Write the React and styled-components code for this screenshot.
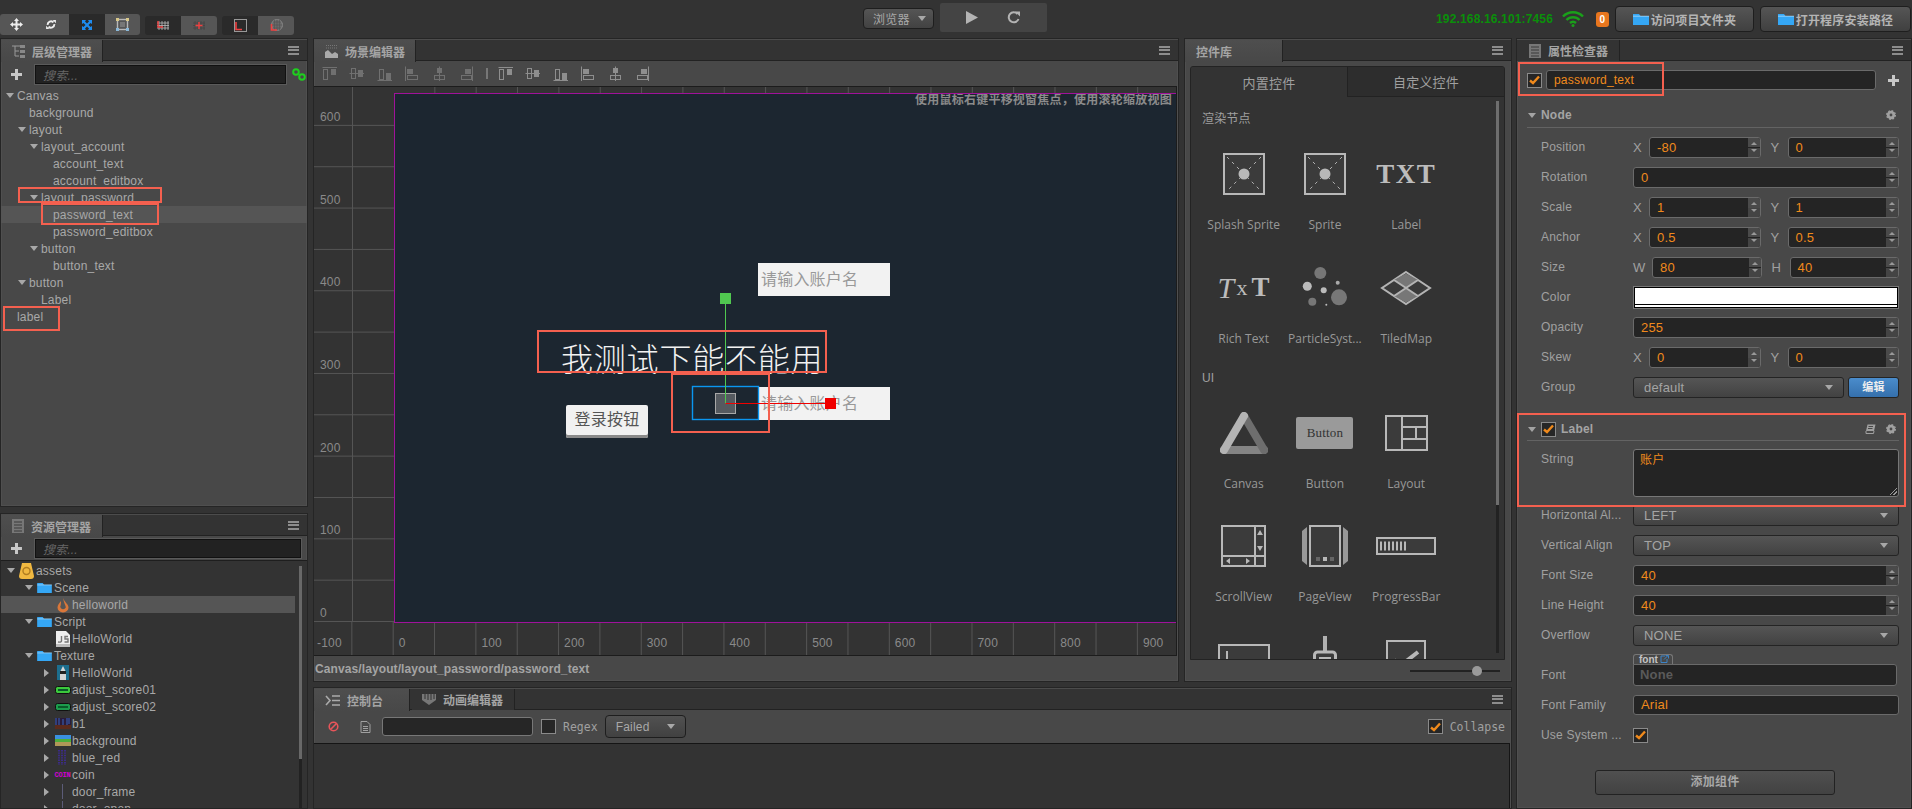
import React from "react";
import styled, { createGlobalStyle } from "styled-components";

const CJK = `"Liberation Sans", "Noto Sans CJK SC", sans-serif`;

const GlobalStyle = createGlobalStyle`
  html, body {
    margin: 0;
    padding: 0;
    background: #333;
    overflow: hidden;
  }
  * { box-sizing: border-box; }
  svg { display: block; flex: none; }
`;

const Page = styled.div`
  position: relative;
  width: 1912px;
  height: 809px;
  overflow: hidden;
  background: #333;
  color: #a8a8a8;
  font: 12px ${CJK};
  letter-spacing: 0.2px;
  display: flex;
  flex-direction: column;
`;

const Highlight = styled.div`
  position: absolute;
  left: ${(p) => p.$l}px;
  top: ${(p) => p.$t}px;
  width: ${(p) => p.$w}px;
  height: ${(p) => p.$h}px;
  border: 2px solid #f4604f;
  pointer-events: none;
`;

/* top bar */
const TopBar = styled.div`
  height: 38px;
  flex: none;
  display: grid;
  grid-template-columns: 863px auto 1fr;
  align-items: center;
`;
const ToolGroups = styled.div`
  display: flex;
  align-items: flex-end;
  height: 35px;
  align-self: start;
`;
const ToolGroup = styled.div`
  display: flex;
  height: ${(p) => p.$h || 19}px;
  margin-left: ${(p) => p.$ml || 0}px;
  border-radius: 3px;
  overflow: hidden;
`;
const ToolBtn = styled.div`
  width: ${(p) => p.$w || 36}px;
  display: flex;
  align-items: center;
  justify-content: center;
  background: ${(p) => (p.$on ? "#2a2a2a" : "#565656")};
`;
const CenterTools = styled.div`
  display: flex;
  align-items: center;
  gap: 6px;
`;
const BrowserSelect = styled.div`
  width: 71px;
  height: 21px;
  border: 1px solid #1e1e1e;
  border-radius: 4px;
  background: linear-gradient(#555, #424242);
  color: #a8a8a8;
  display: flex;
  align-items: center;
  padding-left: 9px;
  gap: 8px;
  margin-top: -1px;
`;
const PlayGroup = styled.div`
  width: 107px;
  height: 29px;
  background: #444;
  border-radius: 2px;
  display: flex;
  align-items: center;
  justify-content: space-around;
  padding: 0 12px;
  margin-top: -3px;
`;
const RightTools = styled.div`
  display: flex;
  align-items: center;
  justify-content: flex-end;
  padding-right: 1px;
`;
const IpText = styled.span`
  color: #0a8f0a;
  font-weight: 700;
  letter-spacing: 0.15px;
  margin-right: 9px;
`;
const Badge = styled.span`
  width: 13px;
  height: 15px;
  margin: 0 6px 0 12px;
  border-radius: 3px;
  background: #e8761e;
  color: #fff;
  font-size: 10px;
  font-weight: 700;
  display: flex;
  align-items: center;
  justify-content: center;
`;
const ProjectBtn = styled.div`
  width: ${(p) => p.$w}px;
  height: 26px;
  margin-left: ${(p) => p.$ml || 0}px;
  border: 1px solid #1e1e1e;
  border-radius: 4px;
  background: linear-gradient(#555, #404040);
  color: #b4b4b4;
  font-weight: 700;
  display: flex;
  align-items: center;
  justify-content: center;
  gap: 2px;
`;

/* layout */
const Workspace = styled.div`
  flex: 1;
  min-height: 0;
  display: flex;
`;
const LeftColumn = styled.div`
  width: 308px;
  flex: none;
  display: flex;
  flex-direction: column;
  gap: 6px;
`;
const MiddleColumn = styled.div`
  width: 1199px;
  flex: none;
  margin: 0 4px 0 5px;
  display: flex;
  flex-direction: column;
  gap: 5px;
`;
const MiddleTop = styled.div`
  height: 644px;
  flex: none;
  display: flex;
  gap: 5px;
`;
const Panel = styled.section`
  display: flex;
  flex-direction: column;
  background: #484848;
  border: 1px solid #252525;
  box-shadow: inset 0 0 0 1px #4f4f4f;
  overflow: hidden;
  flex: none;
  width: ${(p) => (p.$w ? `${p.$w}px` : "auto")};
  height: ${(p) => (p.$h ? `${p.$h}px` : "auto")};
  min-height: 0;
`;
const TabBar = styled.div`
  height: 22px;
  flex: none;
  display: flex;
  background: #333;
  border-bottom: 1px solid #222;
  border-top: 1px solid #4c4c4c;
  position: relative;
`;
const Tab = styled.div`
  width: ${(p) => p.$w}px;
  height: ${(p) => (p.$on ? 22 : 21)}px;
  flex: none;
  margin-right: ${(p) => (p.$on ? 2 : 0)}px;
  padding-left: ${(p) => (p.$pl === undefined ? 11 : p.$pl)}px;
  display: flex;
  align-items: center;
  gap: 7px;
  color: #a4a4a4;
  font-weight: 700;
  letter-spacing: 0;
  background: ${(p) => (p.$on ? "linear-gradient(#4e4e4e, #484848)" : "#333")};
  border-right: 1px solid #222;
  position: relative;
  z-index: 1;
`;
const MenuBtn = styled.div`
  margin-left: auto;
  margin-right: 8px;
  align-self: center;
  width: 11px;
  height: 9px;
  border-top: 2px solid #8d8d8d;
  border-bottom: 2px solid #8d8d8d;
  position: relative;
  &::after {
    content: "";
    position: absolute;
    left: 0;
    right: 0;
    top: 1.5px;
    height: 2px;
    background: #8d8d8d;
  }
`;

const SearchRow = styled.div`
  display: flex;
  align-items: center;
  height: ${(p) => p.$h}px;
  flex: none;
  padding-left: 10px;
`;
const Plus = styled.span`
  width: 11px;
  height: 11px;
  background:
    linear-gradient(#c8c8c8, #c8c8c8) center / 11px 3px no-repeat,
    linear-gradient(#c8c8c8, #c8c8c8) center / 3px 11px no-repeat;
  margin-right: ${(p) => p.$mr || 0}px;
`;
const SearchInput = styled.div`
  width: ${(p) => p.$w}px;
  height: 19px;
  background: #222;
  border: 1px solid #111;
  outline: 1px solid #5a5a5a;
  color: #666;
  font-style: italic;
  display: flex;
  align-items: center;
  padding-left: 7px;
  margin-right: 6px;
`;

/* trees */
const Tree = styled.div`
  flex: 1;
  min-height: 0;
  padding-top: ${(p) => p.$pt || 0}px;
  background: ${(p) => (p.$dark ? "#333" : "transparent")};
  border-top: ${(p) => (p.$dark ? "1px solid #1e1e1e" : "0")};
  position: relative;
  overflow: hidden;
`;
const NodeRow = styled.div`
  height: 17px;
  display: flex;
  align-items: center;
  white-space: nowrap;
  padding-left: ${(p) => 5 + p.$depth * 12}px;
  background: ${(p) => (p.$sel ? "#555" : "transparent")};
`;
const AssetRow = styled.div`
  height: 17px;
  width: 294px;
  display: flex;
  align-items: center;
  white-space: nowrap;
  padding-left: ${(p) => 6 + p.$depth * 18}px;
  background: ${(p) => (p.$sel ? "#555" : "transparent")};
`;
const ArrowSlot = styled.span`
  width: ${(p) => p.$w}px;
  flex: none;
  display: flex;
  align-items: center;
`;
const CaretDown = styled.i`
  width: 0;
  height: 0;
  border-left: 4px solid transparent;
  border-right: 4px solid transparent;
  border-top: 5px solid ${(p) => p.$c || "#a8a8a8"};
`;
const CaretRight = styled.i`
  width: 0;
  height: 0;
  margin-left: 1px;
  border-top: 4px solid transparent;
  border-bottom: 4px solid transparent;
  border-left: 5px solid #a8a8a8;
`;
const IconSlot = styled.span`
  width: 15px;
  height: 15px;
  flex: none;
  margin-right: 2px;
  display: flex;
  align-items: center;
  justify-content: center;
`;
const CoinMark = styled.span`
  color: #d400d4;
  font: 700 7px "Liberation Mono", monospace;
  letter-spacing: -0.2px;
`;
const TreeScroll = styled.div`
  position: absolute;
  left: 298px;
  top: 5px;
  bottom: 0;
  width: 3px;
  background: linear-gradient(#686868 193px, #222 193px);
`;

/* scene */
const AlignBar = styled.div`
  height: 25px;
  flex: none;
  display: flex;
  align-items: center;
  padding-left: 2px;
`;
const AlignBtn = styled.div`
  width: 27.5px;
  display: flex;
  justify-content: center;
`;
const AlignSep = styled.div`
  width: 11px;
  display: flex;
  justify-content: center;
  &::before {
    content: "";
    width: 2px;
    height: 11px;
    background: #777;
  }
`;
const Viewport = styled.div`
  height: 570px;
  flex: none;
  margin-right: 1px;
  border-top: 1px solid #1c1c1c;
  border-right: 1px solid #1c1c1c;
  display: grid;
  grid-template-columns: 80px 1fr;
  grid-template-rows: 535px 34px;
  background: #333;
  overflow: hidden;
`;
const LeftRuler = styled.div`
  display: flex;
  flex-direction: column;
  justify-content: flex-end;
  overflow: hidden;
  color: #8a8a8a;
  background:
    linear-gradient(90deg, #555 1px, transparent 1px) 38px 0 / 1px 100% no-repeat,
    linear-gradient(0deg, #555 1px, transparent 1px) 0 100% / 100% 41.35px;
`;
const RulerY = styled.div`
  height: 82.7px;
  flex: none;
  display: flex;
  align-items: flex-end;
  padding: 0 0 1px 6px;
  line-height: 15px;
`;
const CanvasColumn = styled.div`
  display: flex;
  flex-direction: column;
  min-width: 0;
`;
const TopStrip = styled.div`
  height: 6px;
  flex: none;
  background: linear-gradient(90deg, #555 1px, transparent 1px) -1px 0 / 41.35px 100%;
`;
const Canvas = styled.div`
  flex: 1;
  position: relative;
  overflow: hidden;
  background: #1c2630;
  border: 1px solid #a0129a;
  border-right: 0;
  margin-bottom: -1px;
`;
const BottomRuler = styled.div`
  grid-column: 1 / -1;
  display: flex;
  overflow: hidden;
  color: #8a8a8a;
  border-bottom: 1px solid #1c1c1c;
  background: linear-gradient(90deg, #555 1px, transparent 1px) -4px 0 / 41.35px 100%;
`;
const RulerX = styled.div`
  width: 82.7px;
  flex: none;
  padding: 14px 0 0 6px;
  line-height: 15px;
  &:first-child { margin-left: -4px; padding-left: 7px; }
`;
const HintText = styled.div`
  position: absolute;
  right: 4px;
  top: -1px;
  color: #8b8b8b;
  font-weight: 700;
  letter-spacing: 0.24px;
  line-height: 14px;
  white-space: nowrap;
`;
const EditBox = styled.div`
  position: absolute;
  left: 363px;
  top: ${(p) => p.$t}px;
  width: 132px;
  height: 33px;
  background: #f2f2f2;
  color: #999;
  font-size: 16px;
  padding-left: 3px;
  letter-spacing: 0.2px;
  line-height: 33px;
`;
const TitleText = styled.div`
  position: absolute;
  left: 166px;
  top: 243px;
  color: #f2f2f2;
  font: 300 32px/40px "Noto Sans CJK SC", sans-serif;
  letter-spacing: 0.8px;
  white-space: nowrap;
`;
const LoginButton = styled.div`
  position: absolute;
  left: 171px;
  top: 311px;
  width: 82px;
  height: 33px;
  border-radius: 2px;
  background: #f1f1f1;
  box-shadow: inset 0 -3px 0 #8a8a8a;
  color: #555;
  font-size: 16px;
  line-height: 30px;
  text-align: center;
`;
const GizmoLayer = styled.svg`
  position: absolute;
  left: 295px;
  top: 196px;
`;
const PathBar = styled.div`
  flex: 1;
  display: flex;
  align-items: center;
  padding-left: 1px;
  color: #a4a4a4;
  font-weight: 700;
  letter-spacing: 0.1px;
`;

/* widget library */
const LibBox = styled.div`
  flex: 1;
  min-height: 0;
  margin: 5px 6px 0 5px;
  background: #333;
  border: 1px solid #232323;
  border-radius: 3px 3px 0 0;
  position: relative;
  overflow: hidden;
`;
const LibTabs = styled.div`
  display: flex;
  height: 30px;
`;
const LibTab = styled.div`
  flex: 1;
  display: flex;
  align-items: center;
  justify-content: center;
  font-size: 13px;
  color: #a0a0a0;
  background: ${(p) => (p.$on ? "#333" : "#2d2d2d")};
  border-bottom: ${(p) => (p.$on ? "0" : "1px solid #222")};
  border-left: ${(p) => (p.$on ? "0" : "1px solid #222")};
`;
const LibBody = styled.div`
  padding: 14px 0 0 11px;
`;
const SectionTitle = styled.div`
  line-height: 16px;
  margin: ${(p) => p.$mt || 0}px 0 17px;
  color: #a0a0a0;
`;
const WidgetGrid = styled.div`
  display: grid;
  grid-template-columns: repeat(3, 81.3px);
  grid-auto-rows: 89px;
  row-gap: 24.5px;
  margin-left: 1px;
`;
const WidgetItem = styled.div`
  display: flex;
  flex-direction: column;
  align-items: center;
`;
const WidgetIcon = styled.div`
  height: 60px;
  flex: none;
  display: flex;
  align-items: center;
  justify-content: center;
  color: #bcbcbc;
  font-family: "Liberation Serif", serif;
  font-size: 27px;
  line-height: 1;
  white-space: nowrap;
`;
const TxtMark = styled.b`
  letter-spacing: 1.5px;
`;
const RichItalic = styled.i`
  font-weight: 400;
  font-size: 30px;
`;
const RichSmall = styled.span`
  font-size: 22px;
  margin: 0 4px 0 2px;
`;
const ButtonMark = styled.div`
  width: 57px;
  height: 32px;
  background: #9a9a9a;
  border-radius: 2px;
  color: #333;
  font: 13px/32px "Liberation Serif", serif;
  text-align: center;
`;
const WidgetLabel = styled.div`
  margin-top: 13px;
  font: 12px/16px "Open Sans", sans-serif;
  letter-spacing: 0;
  color: #989898;
  white-space: nowrap;
`;
const LibScrollBar = styled.div`
  position: absolute;
  right: 5px;
  top: 34px;
  height: 552px;
  width: 3px;
  background: linear-gradient(#6e6e6e 404px, #222 404px);
`;
const SliderRow = styled.div`
  height: 21px;
  flex: none;
  display: flex;
  align-items: center;
  justify-content: flex-end;
  padding-right: 11px;
`;
const SliderTrack = styled.div`
  width: 90px;
  height: 2px;
  background: #222;
  position: relative;
`;
const SliderThumb = styled.div`
  position: absolute;
  left: 62px;
  top: -4px;
  width: 10px;
  height: 10px;
  border-radius: 50%;
  background: #9a9a9a;
`;

/* console */
const ConsoleBar = styled.div`
  height: 33px;
  flex: none;
  display: flex;
  align-items: center;
  padding-left: 11px;
`;
const IconBtn = styled.div`
  margin-left: ${(p) => p.$ml || 0}px;
  display: flex;
`;
const FilterInput = styled.div`
  width: 151px;
  height: 19px;
  margin: 0 8px 0 11px;
  background: #262626;
  border: 1px solid #777;
  border-radius: 3px;
`;
const CheckBox = styled.div`
  width: 15px;
  height: 15px;
  flex: none;
  margin-left: ${(p) => p.$ml || 0}px;
  margin-right: ${(p) => p.$mr || 0}px;
  background: #262626;
  border: 1px solid #8a8a8a;
  display: flex;
  align-items: center;
  justify-content: center;
`;
const MonoLabel = styled.span`
  font: 11.5px "DejaVu Sans Mono", monospace;
  letter-spacing: 0;
  color: #a0a0a0;
  margin-left: 7px;
  white-space: nowrap;
`;
const FailedSelect = styled.div`
  width: 81px;
  height: 23px;
  margin-left: 7px;
  background: linear-gradient(#515151, #414141);
  border: 1px solid #1e1e1e;
  border-radius: 4px;
  display: flex;
  align-items: center;
  justify-content: space-between;
  padding: 0 10px;
`;
const ConsoleBody = styled.div`
  flex: 1;
  margin-right: 1px;
  background: #333;
  border-top: 1px solid #151515;
  border-right: 1px solid #151515;
`;

/* inspector */
const InspectorBody = styled.div`
  flex: 1;
  padding: 0 12px 0 10px;
`;
const NameRow = styled.div`
  height: 38px;
  display: flex;
  align-items: center;
`;
const NameInput = styled.div`
  width: 330px;
  height: 20px;
  margin: 0 12px 0 4px;
  background: #242424;
  border: 1px solid #6a6a6a;
  border-radius: 3px;
  color: #f08a1c;
  padding-left: 7px;
  line-height: 18px;
  font-size: 12px;
`;
const CompHeader = styled.div`
  display: flex;
  align-items: center;
  height: ${(p) => p.$h}px;
  margin-top: ${(p) => p.$mt || 0}px;
  margin-bottom: ${(p) => p.$mb || 0}px;
  padding: 4px 3px 0 1px;
  border-bottom: 1px solid #636363;
  font-weight: 700;
  color: #a4a4a4;
  gap: 5px;
`;
const HeaderTools = styled.div`
  margin-left: auto;
  display: flex;
  align-items: center;
  gap: 10px;
`;
const PropRow = styled.div`
  display: flex;
  align-items: ${(p) => p.$align || "center"};
  height: ${(p) => p.$h || 30}px;
  padding-left: 14px;
`;
const PropLabel = styled.div`
  width: 92px;
  flex: none;
  color: #a0a0a0;
  white-space: nowrap;
  line-height: ${(p) => p.$lh || 20}px;
`;
const PropField = styled.div`
  flex: 1;
  min-width: 0;
  display: flex;
  align-items: center;
`;
const AxisLabel = styled.span`
  width: ${(p) => p.$w}px;
  margin-left: ${(p) => p.$ml || 0}px;
  flex: none;
  font-size: 13px;
  color: #a0a0a0;
`;
const NumInput = styled.div`
  flex: 1;
  min-width: 0;
  height: 21px;
  display: flex;
  background: #242424;
  border: 1px solid #6a6a6a;
  border-radius: 3px;
  overflow: hidden;
`;
const NumValue = styled.div`
  flex: 1;
  color: #f08a1c;
  padding-left: 7px;
  line-height: 19px;
  font-size: 13px;
`;
const Spinner = styled.div`
  width: 12px;
  flex: none;
  background: linear-gradient(#4a4a4a 50%, #222 50%, #222 55%, #444 55%);
  display: flex;
  flex-direction: column;
  align-items: center;
  justify-content: space-around;
  padding: 2px 0;
`;
const SpinUp = styled.i`
  border-left: 3px solid transparent;
  border-right: 3px solid transparent;
  border-bottom: 3px solid #999;
`;
const SpinDown = styled.i`
  border-left: 3px solid transparent;
  border-right: 3px solid transparent;
  border-top: 3px solid #999;
`;
const ColorBar = styled.div`
  width: 100%;
  height: 23px;
  padding: 1px;
  border: 1px solid #777;
  background: #000;
  display: flex;
  flex-direction: column;
  gap: 1px;
  &::before {
    content: "";
    height: 16px;
    background: #fff;
  }
  &::after {
    content: "";
    height: 2px;
    background: #fff;
  }
`;
const SelectBox = styled.div`
  flex: 1;
  min-width: 0;
  height: 21px;
  display: flex;
  align-items: center;
  justify-content: space-between;
  padding: 0 10px;
  background: linear-gradient(#555, #424242);
  border: 1px solid #242424;
  border-radius: 3px;
  color: #a4a4a4;
  font-size: 13px;
`;
const EditBtn = styled.div`
  width: 51px;
  height: 21px;
  margin-left: 4px;
  background: linear-gradient(#4a8ccc, #3570ac);
  border: 1px solid #242424;
  border-radius: 3px;
  color: #eee;
  font-weight: 700;
  font-size: 11px;
  text-align: center;
  line-height: 19px;
`;
const StringArea = styled.div`
  flex: 1;
  height: 48px;
  margin-top: 8px;
  background: #242424;
  border: 1px solid #777;
  border-radius: 3px;
  color: #f08a1c;
  padding: 2px 0 0 6px;
  line-height: 16px;
  position: relative;
  &::after {
    content: "";
    position: absolute;
    right: 1px;
    bottom: 1px;
    width: 7px;
    height: 7px;
    background: linear-gradient(135deg, transparent 45%, #999 45%, #999 55%, transparent 55%, transparent 70%, #999 70%, #999 80%, transparent 80%);
  }
`;
const FontField = styled.div`
  width: 264px;
  padding-bottom: 4px;
`;
const FontChip = styled.div`
  width: 40px;
  height: 11px;
  padding-left: 5px;
  background: #484848;
  border: 1px solid #777;
  border-bottom: 0;
  border-radius: 3px 3px 0 0;
  color: #c4c4c4;
  font-size: 10px;
  font-weight: 700;
  line-height: 10px;
  letter-spacing: 0;
  display: flex;
  gap: 2px;
`;
const FontBox = styled.div`
  height: 22px;
  background: #242424;
  border: 1px solid #6a6a6a;
  border-radius: 0 3px 3px 3px;
  margin-top: -1px;
  color: #5a5a5a;
  padding-left: 6px;
  line-height: 20px;
  font-size: 13px;
  font-weight: 700;
`;
const TextInput = styled.div`
  flex: 1;
  height: 20px;
  background: #242424;
  border: 1px solid #6a6a6a;
  border-radius: 3px;
  color: #f08a1c;
  padding-left: 7px;
  line-height: 18px;
  font-size: 13px;
`;
const AddButton = styled.div`
  width: 240px;
  height: 25px;
  margin: 20px auto 0;
  position: relative;
  left: 2px;
  background: linear-gradient(#505050, #424242);
  border: 1px solid #222;
  border-radius: 3px;
  color: #a8a8a8;
  font-size: 12px;
  font-weight: 700;
  text-align: center;
  line-height: 23px;
`;

/* drawings */
const Check = () => (
  <svg width="11" height="10" viewBox="0 0 11 10">
    <path d="M1 5.5 L4 8 L10 1.5" fill="none" stroke="#f08a1c" strokeWidth="2.4" />
  </svg>
);
const Gear = () => (
  <svg width="10" height="10" viewBox="0 0 10 10">
    <circle cx="5" cy="5" r="2.8" fill="none" stroke="#a0a0a0" strokeWidth="2.8" />
    <circle cx="5" cy="5" r="4.4" fill="none" stroke="#a0a0a0" strokeWidth="1.2" strokeDasharray="1.8 1.65" />
  </svg>
);
const Book = () => (
  <svg width="11" height="10" viewBox="0 0 11 10">
    <path d="M2.5 .5 H10.5 L9 7 H1 Z" fill="#a0a0a0" />
    <path d="M1 7 V9.5 H8.5 L9 7" fill="none" stroke="#a0a0a0" />
    <path d="M3.5 2.5 H8 M3 4.5 H7.5" stroke="#484848" />
  </svg>
);
const Folder = ({ w = 16, h = 12 }) => (
  <svg width={w} height={h} viewBox="0 0 16 12">
    <path d="M0 1 H6 L7.5 3 H16 V12 H0 Z" fill="#35a7f5" />
    <path d="M0 3.2 H16" stroke="#cfe9fb" strokeWidth=".6" />
  </svg>
);
const Flame = () => (
  <svg width="14" height="16" viewBox="0 0 14 16">
    <path d="M7.5 1 C8 5 12.5 7 12.5 10.5 A5.5 5 0 0 1 1.5 10.5 C1.5 8 3.5 6 5 4 C5 6 5 8 4.2 10 A3 3 0 0 0 9.8 10.5 C9.8 8 7 5 7.5 1 Z" fill="#d9773a" />
  </svg>
);
const JsFile = () => (
  <svg width="14" height="16" viewBox="0 0 14 16">
    <path d="M0 0 H10 L14 4 V16 H0 Z" fill="#eee" />
    <path d="M0 13 H14 V16 H0 Z" fill="#bbb" />
    <path d="M5.5 5 V10 Q5.5 11.5 2 11 M12 5.5 H9 V8 H12 V11 H8.5" fill="none" stroke="#777" strokeWidth="1.4" />
  </svg>
);
const AssetsDb = () => (
  <svg width="15" height="16" viewBox="0 0 15 16">
    <path d="M3 0 H12 L15 13 Q15 16 12 16 H3 Q0 16 0 13 Z" fill="#f0b840" />
    <circle cx="7.5" cy="8" r="3.5" fill="none" stroke="#b07d20" strokeWidth="1.4" />
  </svg>
);
const ThumbCat = () => (
  <svg width="12" height="15" viewBox="0 0 12 15">
    <rect width="12" height="15" fill="#1c6e8e" />
    <path d="M3 15 V7 L6 1 L9 7 V15 Z" fill="#d6d6d6" />
    <rect x="3" y="6" width="6" height="3" fill="#222" />
  </svg>
);
const ThumbPill = ({ c }) => (
  <svg width="16" height="8" viewBox="0 0 16 8">
    <rect x=".5" y=".5" width="15" height="7" rx="2" fill={c} stroke="#111" />
    <rect x="3" y="3" width="10" height="2" fill="#0a5a2a" />
  </svg>
);
const ThumbB1 = () => (
  <svg width="16" height="11" viewBox="0 0 16 11">
    <rect width="16" height="11" fill="#2a1c3a" />
    <path d="M1 0 V7 M4 0 V8 M8 1 V9 M12 0 V7 M14 0 V6" stroke="#3858a8" strokeWidth="1.2" />
    <rect y="7" width="16" height="4" fill="#5a2a1c" />
  </svg>
);
const ThumbBg = () => (
  <svg width="16" height="11" viewBox="0 0 16 11">
    <rect width="16" height="4" fill="#3a90e0" />
    <rect y="4" width="16" height="3" fill="#4cae3c" />
    <rect y="7" width="16" height="4" fill="#b09858" />
  </svg>
);
const ThumbDots = () => (
  <svg width="10" height="15" viewBox="0 0 10 15">
    <path d="M1 0 V15 M4 0 V15 M7 0 V15" stroke="#3c2c88" strokeWidth="2" strokeDasharray="1.4 1" />
  </svg>
);
const ThumbLine = () => (
  <svg width="3" height="15" viewBox="0 0 3 15">
    <rect x="1" width="1" height="15" fill="#5c5c78" />
  </svg>
);

const TabTree = () => (
  <svg width="13" height="13" viewBox="0 0 13 13">
    <path d="M0 1 H8 M3 1 V11 H7 M3 6 H7" stroke="#999" fill="none" />
    <rect x="8" y="0" width="5" height="3" fill="#888" />
    <rect x="8" y="5" width="5" height="3" fill="#888" />
    <rect x="8" y="10" width="5" height="3" fill="#888" />
  </svg>
);
const TabDoc = () => (
  <svg width="12" height="14" viewBox="0 0 12 14">
    <rect width="12" height="14" fill="#777" />
    <path d="M2 3 H10 M2 6 H10 M2 9 H10 M2 12 H10" stroke="#3a3a3a" />
  </svg>
);
const TabScene = () => (
  <svg width="13" height="14" viewBox="0 0 13 14">
    <path d="M1 1.5 H12 M1 4 H12" stroke="#777" strokeDasharray="1 1" />
    <path d="M0 14 V8 L3 6 L7 10 L10 8 L13 10 V14 Z" fill="#aaa" />
  </svg>
);
const TabConsole = () => (
  <svg width="15" height="11" viewBox="0 0 15 11">
    <path d="M1 1 L5 5.5 L1 10" fill="none" stroke="#aaa" strokeWidth="1.6" />
    <path d="M7 1 H15 M7 5.5 H15 M7 10 H15" stroke="#aaa" strokeWidth="1.3" />
  </svg>
);
const TabAnim = () => (
  <svg width="14" height="11" viewBox="0 0 14 11">
    <path d="M0 0 H14 V6 L7 11 L0 6 Z" fill="#777" />
    <path d="M3 0 V5 M6 0 V6 M9 0 V6 M12 0 V5" stroke="#333" />
  </svg>
);

const BanIcon = () => (
  <svg width="11" height="11" viewBox="0 0 11 11">
    <circle cx="5.5" cy="5.5" r="4.3" fill="none" stroke="#e8555a" strokeWidth="1.6" />
    <path d="M2.5 8.5 L8.5 2.5" stroke="#e8555a" strokeWidth="1.6" />
  </svg>
);
const NoteIcon = () => (
  <svg width="11" height="12" viewBox="0 0 11 12">
    <path d="M1 .5 H7 L10 3.5 V11.5 H1 Z" fill="none" stroke="#a0a0a0" />
    <path d="M3 5.5 H8 M3 7.5 H8 M3 9.5 H8" stroke="#a0a0a0" />
  </svg>
);

const MoveIcon = () => (
  <svg width="13" height="13" viewBox="0 0 13 13">
    <path d="M6.5 0 L9 3 H7.5 V5.5 H10 V4 L13 6.5 L10 9 V7.5 H7.5 V10 H9 L6.5 13 L4 10 H5.5 V7.5 H3 V9 L0 6.5 L3 4 V5.5 H5.5 V3 H4 Z" fill="#eee" />
  </svg>
);
const RotateIcon = () => (
  <svg width="10" height="9" viewBox="0 0 12 11">
    <path d="M2 6 A4 4 0 0 1 9 3 M10 5 A4 4 0 0 1 3 8" fill="none" stroke="#eee" strokeWidth="2.4" />
    <path d="M8 0 H12 V4 Z M4 11 H0 V7 Z" fill="#eee" />
  </svg>
);
const ScaleIcon = () => (
  <svg width="10" height="10" viewBox="0 0 10 10">
    <path d="M0 0 H4 L3 1.5 L5 3.5 L7 1.5 L6 0 H10 V4 L8.5 3 L6.5 5 L8.5 7 L10 6 V10 H6 L7 8.5 L5 6.5 L3 8.5 L4 10 H0 V6 L1.5 7 L3.5 5 L1.5 3 L0 4 Z" fill="#1e8cf0" />
  </svg>
);
const RectIcon = () => (
  <svg width="13" height="13" viewBox="0 0 13 13">
    <rect x="1.5" y="1.5" width="10" height="10" fill="none" stroke="#b8b8b8" strokeWidth="1.4" />
    <rect x="4" y="4" width="5" height="5" fill="#777" />
    <rect width="3" height="3" fill="#d8c88a" />
    <rect x="10" width="3" height="3" fill="#d8c88a" />
    <rect y="10" width="3" height="3" fill="#8ab8d8" />
    <rect x="10" y="10" width="3" height="3" fill="#8ab8d8" />
  </svg>
);
const GridPivot = ({ center }) => (
  <svg width="12" height="9" viewBox="0 0 12 9">
    <path d="M0 2 H12 M0 4.5 H12 M0 7 H12 M2 0 V9 M5 0 V9 M8 0 V9 M11 0 V9" stroke={center ? "#444" : "#bbb"} strokeWidth=".8" />
    {center ? (
      <path d="M6 1 V8 M2.5 4.5 H9.5" stroke="#f04040" strokeWidth="1.4" />
    ) : (
      <path d="M1 0 V6 H6" stroke="#f04040" fill="none" strokeWidth="1.4" />
    )}
  </svg>
);
const LocalIcon = () => (
  <svg width="13" height="13" viewBox="0 0 13 13">
    <rect x=".5" y=".5" width="12" height="12" fill="none" stroke="#999" />
    <path d="M2 3 V10.5 H8" fill="none" stroke="#f04040" strokeWidth="1.6" />
  </svg>
);
const GlobeIcon = () => (
  <svg width="13" height="13" viewBox="0 0 13 13">
    <circle cx="7" cy="6" r="5.5" fill="#6a6a6a" stroke="#888" />
    <path d="M1.5 6 H12.5 M7 .5 V11.5 M3 3 H11 M3 9 H11 M4.5 1 V11 M9.5 1 V11" stroke="#555" strokeWidth=".7" />
    <path d="M1.5 5 V11 H7" fill="none" stroke="#f04040" strokeWidth="1.6" />
  </svg>
);
const PlayIcon = () => (
  <svg width="12" height="13" viewBox="0 0 12 13">
    <path d="M0 0 L12 6.5 L0 13 Z" fill="#b4b4b4" />
  </svg>
);
const ReloadIcon = () => (
  <svg width="14" height="13" viewBox="0 0 14 13">
    <path d="M10.5 3 A5 5 0 1 0 11.5 8" fill="none" stroke="#b4b4b4" strokeWidth="2" />
    <path d="M8 0.5 H13 V5.5 Z" fill="#b4b4b4" />
  </svg>
);
const Wifi = () => (
  <svg width="22" height="16" viewBox="0 0 22 16">
    <g fill="none" stroke="#1aa01a" strokeWidth="2.4">
      <path d="M1 5.5 A14 14 0 0 1 21 5.5" />
      <path d="M4.5 9 A9 9 0 0 1 17.5 9" />
      <path d="M8 12 A4.5 4.5 0 0 1 14 12" />
    </g>
    <circle cx="11" cy="14.5" r="1.5" fill="#1aa01a" />
  </svg>
);
const LinkIcon = () => (
  <svg width="14" height="13" viewBox="0 0 14 13">
    <g fill="none" stroke="#1ed01e" strokeWidth="2">
      <circle cx="4" cy="4" r="2.8" />
      <circle cx="10" cy="9" r="2.8" />
    </g>
  </svg>
);
const SmallLink = () => (
  <svg width="9" height="8" viewBox="0 0 9 8">
    <path d="M5 1 H1 V7.5 H7 V4 M4 4.5 L8 .5 M5.5 .5 H8.5 V3.5" fill="none" stroke="#3c84c8" />
  </svg>
);

const AlignIcon = ({ type, bright }) => {
  const c = bright ? "#8e8e8e" : "#707070";
  const box = { fill: "none", stroke: c };
  const parts = {
    top: [[0.5, 1.5, 15, 1.5], [1.5, 3.5, 4, 10], [9, 3, 5, 6]],
    mid: [[0.5, 7.5, 15, 7.5], [2.5, 2.5, 4, 10], [9, 4, 5, 7]],
    bot: [[0.5, 14.5, 15, 14.5], [2.5, 3.5, 4, 10], [9, 7, 5, 7]],
    lef: [[1.5, 0.5, 1.5, 15], [3.5, 9.5, 10, 4], [3, 3, 6, 5]],
    cen: [[7.5, 0.5, 7.5, 15], [2.5, 9.5, 10, 4], [5, 2, 5, 5]],
    rig: [[13.5, 0.5, 13.5, 15], [2.5, 9.5, 10, 4], [6, 3, 6, 5]],
  }[type];
  const [l, o, f] = parts;
  return (
    <svg width="16" height="16" viewBox="0 0 16 16">
      <path d={`M${l[0]} ${l[1]} L${l[2]} ${l[3]}`} stroke={c} />
      <rect x={o[0]} y={o[1]} width={o[2]} height={o[3]} {...box} />
      <rect x={f[0]} y={f[1]} width={f[2]} height={f[3]} fill={c} />
    </svg>
  );
};

const SpriteIcon = () => (
  <svg width="42" height="42" viewBox="0 0 42 42">
    <rect x="1" y="1" width="40" height="40" fill="#3b3b3b" stroke="#b8b8b8" strokeWidth="2" />
    <path d="M4 4 L38 38 M38 4 L4 38" stroke="#b0b0b0" strokeDasharray="3 4" />
    <circle cx="21" cy="21" r="5.5" fill="#b8b8b8" />
  </svg>
);
const ParticleIcon = () => (
  <svg width="48" height="44" viewBox="-24 -22 48 44">
    <circle cx="-4.7" cy="-15" r="6" fill="#777" />
    <circle cx="-17.7" cy="-1.7" r="4.5" fill="#bbb" />
    <circle cx="-1.3" cy="2.3" r="3" fill="#bbb" />
    <circle cx="12.7" cy="-5.3" r="2" fill="#aaa" />
    <circle cx="-12.7" cy="13.7" r="4" fill="#777" />
    <circle cx="14" cy="9.3" r="8" fill="#777" />
    <circle cx="1.3" cy="16.7" r="1" fill="#bbb" />
  </svg>
);
const TiledIcon = () => (
  <svg width="52" height="36" viewBox="0 0 52 36">
    <path d="M26 2 L50 18 L26 34 L2 18 Z" fill="#3a3a3a" stroke="#b4b4b4" strokeWidth="2" />
    <path d="M26 3.5 L38 10 L26 18 L14 10 Z M26 18 L38 26 L26 32.5 L14 26 Z" fill="#777" />
    <path d="M14 10 L38 26 M38 10 L14 26" stroke="#b4b4b4" strokeWidth="2" />
  </svg>
);
const CanvasIcon = () => (
  <svg width="48" height="42" viewBox="0 0 48 42">
    <g fill="none" strokeWidth="8" strokeLinecap="round">
      <path d="M4 38 H44" stroke="#848484" />
      <path d="M44 38 L24 4" stroke="#6e6e6e" />
      <path d="M24 4 L4 38" stroke="#b4b4b4" />
    </g>
  </svg>
);
const LayoutIcon = () => (
  <svg width="43" height="36" viewBox="0 0 43 36">
    <rect x="1" y="1" width="41" height="34" fill="#3b3b3b" stroke="#b8b8b8" strokeWidth="2" />
    <path d="M17 1 V35 M17 12 H42 M17 24 H42 M31 12 V24" stroke="#b8b8b8" strokeWidth="2" />
  </svg>
);
const ScrollIcon = () => (
  <svg width="45" height="42" viewBox="0 0 45 42">
    <rect x="1" y="1" width="43" height="40" fill="#3b3b3b" stroke="#b8b8b8" strokeWidth="2" />
    <path d="M34 1 V41 M1 31 H44" stroke="#b8b8b8" strokeWidth="2" />
    <path d="M39 5 L42 10 H36 Z M39 26 L42 21 H36 Z M5 36 L9 33 V39 Z M29 36 L25 33 V39 Z" fill="#b8b8b8" />
  </svg>
);
const PageIcon = () => (
  <svg width="46" height="42" viewBox="0 0 46 42">
    <path d="M5 2 V40 L0 36 V6 Z M41 2 V40 L46 36 V6 Z" fill="#999" />
    <rect x="8" y="1" width="30" height="40" fill="#3b3b3b" stroke="#b8b8b8" strokeWidth="2" />
    <rect x="14" y="32" width="4" height="4" fill="#666" />
    <rect x="21" y="32" width="4" height="4" fill="#b8b8b8" />
    <rect x="28" y="32" width="4" height="4" fill="#666" />
  </svg>
);
const ProgressIcon = () => (
  <svg width="60" height="18" viewBox="0 0 60 18">
    <rect x="1" y="1" width="58" height="16" fill="#3b3b3b" stroke="#b8b8b8" strokeWidth="2" />
    <path d="M5 4.5 V13.5 M9 4.5 V13.5 M13 4.5 V13.5 M17 4.5 V13.5 M21 4.5 V13.5 M25 4.5 V13.5 M29 4.5 V13.5" stroke="#b8b8b8" strokeWidth="2" />
  </svg>
);
const EditIcon = () => (
  <svg width="52" height="32" viewBox="0 0 52 32">
    <rect x="1" y="1" width="50" height="30" fill="#3b3b3b" stroke="#b8b8b8" strokeWidth="2" />
    <path d="M9 7 V27" stroke="#b8b8b8" strokeWidth="2" />
  </svg>
);
const SliderIcon = () => (
  <svg width="24" height="48" viewBox="0 0 24 48">
    <rect x="10" width="4" height="20" fill="#b0b0b0" />
    <rect x="1.5" y="16" width="21" height="26" rx="3" fill="#3b3b3b" stroke="#b8b8b8" strokeWidth="3" />
    <rect x="7" y="22" width="10" height="8" fill="none" stroke="#b8b8b8" strokeWidth="2" />
  </svg>
);
const ToggleIcon = () => (
  <svg width="40" height="40" viewBox="0 0 40 40">
    <rect x="1" y="1" width="38" height="38" fill="#3b3b3b" stroke="#b8b8b8" strokeWidth="2" />
    <path d="M8 20 L14 26 L32 12" fill="none" stroke="#b8b8b8" strokeWidth="4" strokeDasharray="5 4 40" />
  </svg>
);

/* data */
const HIERARCHY = [
  [0, "Canvas", true],
  [1, "background"],
  [1, "layout", true],
  [2, "layout_account", true],
  [3, "account_text"],
  [3, "account_editbox"],
  [2, "layout_password", true],
  [3, "password_text", false, true],
  [3, "password_editbox"],
  [2, "button", true],
  [3, "button_text"],
  [1, "button", true],
  [2, "Label"],
  [0, "label"],
];

const ASSETS = [
  { d: 0, name: "assets", open: true, icon: <AssetsDb /> },
  { d: 1, name: "Scene", open: true, icon: <Folder w={15} h={11} /> },
  { d: 2, name: "helloworld", icon: <Flame />, sel: true },
  { d: 1, name: "Script", open: true, icon: <Folder w={15} h={11} /> },
  { d: 2, name: "HelloWorld", icon: <JsFile /> },
  { d: 1, name: "Texture", open: true, icon: <Folder w={15} h={11} /> },
  { d: 2, name: "HelloWorld", closed: true, icon: <ThumbCat /> },
  { d: 2, name: "adjust_score01", closed: true, icon: <ThumbPill c="#3cc83c" /> },
  { d: 2, name: "adjust_score02", closed: true, icon: <ThumbPill c="#1c9c4c" /> },
  { d: 2, name: "b1", closed: true, icon: <ThumbB1 /> },
  { d: 2, name: "background", closed: true, icon: <ThumbBg /> },
  { d: 2, name: "blue_red", closed: true, icon: <ThumbDots /> },
  { d: 2, name: "coin", closed: true, icon: <CoinMark>COIN</CoinMark> },
  { d: 2, name: "door_frame", closed: true, icon: <ThumbLine /> },
  { d: 2, name: "door_open", closed: true, icon: <ThumbLine /> },
];

const RENDER_WIDGETS = [
  ["Splash Sprite", <SpriteIcon />],
  ["Sprite", <SpriteIcon />],
  ["Label", <TxtMark>TXT</TxtMark>],
  ["Rich Text", <><RichItalic>T</RichItalic><RichSmall>x</RichSmall><b>T</b></>],
  ["ParticleSyst...", <ParticleIcon />],
  ["TiledMap", <TiledIcon />],
];
/* the last row is cut by the box, only its icons show */
const UI_WIDGETS = [
  ["Canvas", <CanvasIcon />],
  ["Button", <ButtonMark>Button</ButtonMark>],
  ["Layout", <LayoutIcon />],
  ["ScrollView", <ScrollIcon />],
  ["PageView", <PageIcon />],
  ["ProgressBar", <ProgressIcon />],
  [null, <EditIcon />],
  [null, <SliderIcon />],
  [null, <ToggleIcon />],
];

const ALIGN_A = ["top", "mid", "bot", "lef", "cen", "rig"];
const RULER_Y = [600, 500, 400, 300, 200, 100, 0];
const RULER_X = [-100, 0, 100, 200, 300, 400, 500, 600, 700, 800, 900];

const Arrow = () => <CaretDown $c="#a8a8a8" />;

const Num = ({ value }) => (
  <NumInput>
    <NumValue>{value}</NumValue>
    <Spinner>
      <SpinUp />
      <SpinDown />
    </Spinner>
  </NumInput>
);

const Pair = ({ a = "X", b = "Y", va, vb, wa = 16, wb = 17 }) => (
  <PropField>
    <AxisLabel $w={wa}>{a}</AxisLabel>
    <Num value={va} />
    <AxisLabel $w={wb} $ml={10}>{b}</AxisLabel>
    <Num value={vb} />
  </PropField>
);

const Prop = ({ label, children }) => (
  <PropRow>
    <PropLabel>{label}</PropLabel>
    <PropField>{children}</PropField>
  </PropRow>
);

const Select = ({ value }) => (
  <SelectBox>
    {value}
    <CaretDown />
  </SelectBox>
);

const Widget = ({ name, icon }) => (
  <WidgetItem>
    <WidgetIcon>{icon}</WidgetIcon>
    {name && <WidgetLabel>{name}</WidgetLabel>}
  </WidgetItem>
);

export default function App() {
  return (
    <Page>
      <GlobalStyle />
      <TopBar>
        <ToolGroups>
          <ToolGroup $h={21}>
            <ToolBtn $w={33}><MoveIcon /></ToolBtn>
            <ToolBtn><RotateIcon /></ToolBtn>
            <ToolBtn $on><ScaleIcon /></ToolBtn>
            <ToolBtn $w={35}><RectIcon /></ToolBtn>
          </ToolGroup>
          <ToolGroup $ml={5}>
            <ToolBtn $on><GridPivot /></ToolBtn>
            <ToolBtn><GridPivot center /></ToolBtn>
          </ToolGroup>
          <ToolGroup $ml={5}>
            <ToolBtn $on><LocalIcon /></ToolBtn>
            <ToolBtn><GlobeIcon /></ToolBtn>
          </ToolGroup>
        </ToolGroups>
        <CenterTools>
          <BrowserSelect>
            浏览器
            <CaretDown />
          </BrowserSelect>
          <PlayGroup>
            <PlayIcon />
            <ReloadIcon />
          </PlayGroup>
        </CenterTools>
        <RightTools>
          <IpText>192.168.16.101:7456</IpText>
          <Wifi />
          <Badge>0</Badge>
          <ProjectBtn $w={139}><Folder />访问项目文件夹</ProjectBtn>
          <ProjectBtn $w={151} $ml={6}><Folder />打开程序安装路径</ProjectBtn>
        </RightTools>
      </TopBar>

      <Workspace>
        <LeftColumn>
          <Panel $h={469}>
            <TabBar>
              <Tab $w={102} $on><TabTree />层级管理器</Tab>
              <MenuBtn />
            </TabBar>
            <SearchRow $h={26}>
              <Plus $mr={13} />
              <SearchInput $w={251}>搜索...</SearchInput>
              <LinkIcon />
            </SearchRow>
            <Tree>
              {HIERARCHY.map(([depth, name, open, sel], i) => (
                <NodeRow key={i} $depth={depth} $sel={sel}>
                  <ArrowSlot $w={11}>{open && <Arrow />}</ArrowSlot>
                  {name}
                </NodeRow>
              ))}
            </Tree>
          </Panel>
          <Panel $h={296}>
            <TabBar>
              <Tab $w={102} $on><TabDoc />资源管理器</Tab>
              <MenuBtn />
            </TabBar>
            <SearchRow $h={24}>
              <Plus $mr={13} />
              <SearchInput $w={269}>搜索...</SearchInput>
            </SearchRow>
            <Tree $dark $pt={1}>
              {ASSETS.map((a, i) => (
                <AssetRow key={i} $depth={a.d} $sel={a.sel}>
                  <ArrowSlot $w={12}>
                    {a.open && <Arrow />}
                    {a.closed && <CaretRight />}
                  </ArrowSlot>
                  <IconSlot>{a.icon}</IconSlot>
                  {a.name}
                </AssetRow>
              ))}
              <TreeScroll />
            </Tree>
          </Panel>
        </LeftColumn>

        <MiddleColumn>
          <MiddleTop>
            <Panel $w={866} $h={644}>
              <TabBar>
                <Tab $w={102} $on><TabScene />场景编辑器</Tab>
                <MenuBtn />
              </TabBar>
              <AlignBar>
                {ALIGN_A.map((t) => (
                  <AlignBtn key={t}><AlignIcon type={t} /></AlignBtn>
                ))}
                <AlignSep />
                {ALIGN_A.map((t) => (
                  <AlignBtn key={t}><AlignIcon type={t} bright /></AlignBtn>
                ))}
              </AlignBar>
              <Viewport>
                <LeftRuler>
                  {RULER_Y.map((n) => (
                    <RulerY key={n}>{n}</RulerY>
                  ))}
                </LeftRuler>
                <CanvasColumn>
                  <TopStrip />
                  <Canvas>
                    <HintText>使用鼠标右键平移视窗焦点，使用滚轮缩放视图</HintText>
                    <EditBox $t={169}>请输入账户名</EditBox>
                    <EditBox $t={293}>请输入账户名</EditBox>
                    <TitleText>我测试下能不能用</TitleText>
                    <LoginButton>登录按钮</LoginButton>
                    <GizmoLayer width="150" height="135" viewBox="0 0 150 135">
                      <rect x="2.5" y="96.5" width="66" height="33" fill="none" stroke="#0a96f0" strokeWidth="1.4" />
                      <rect x="25.5" y="103.5" width="20" height="20" fill="#555a60" stroke="#a8a8a8" />
                      <path d="M35.5 14 V113.5" stroke="#50c850" />
                      <rect x="30" y="3" width="11" height="11" fill="#50c850" />
                      <path d="M35.5 113.5 H135" stroke="#f00000" />
                      <rect x="135" y="108" width="11" height="11" fill="#f00000" />
                    </GizmoLayer>
                  </Canvas>
                </CanvasColumn>
                <BottomRuler>
                  {RULER_X.map((n) => (
                    <RulerX key={n}>{n}</RulerX>
                  ))}
                </BottomRuler>
              </Viewport>
              <PathBar>Canvas/layout/layout_password/password_text</PathBar>
            </Panel>

            <Panel $w={328} $h={644}>
              <TabBar>
                <Tab $w={98} $on>控件库</Tab>
                <MenuBtn />
              </TabBar>
              <LibBox>
                <LibTabs>
                  <LibTab $on>内置控件</LibTab>
                  <LibTab>自定义控件</LibTab>
                </LibTabs>
                <LibBody>
                  <SectionTitle>渲染节点</SectionTitle>
                  <WidgetGrid>
                    {RENDER_WIDGETS.map(([name, icon]) => (
                      <Widget key={name} name={name} icon={icon} />
                    ))}
                  </WidgetGrid>
                  <SectionTitle $mt={23}>UI</SectionTitle>
                  <WidgetGrid>
                    {UI_WIDGETS.map(([name, icon], i) => (
                      <Widget key={i} name={name} icon={icon} />
                    ))}
                  </WidgetGrid>
                </LibBody>
                <LibScrollBar />
              </LibBox>
              <SliderRow>
                <SliderTrack><SliderThumb /></SliderTrack>
              </SliderRow>
            </Panel>
          </MiddleTop>

          <Panel $w={1199} $h={122}>
            <TabBar>
              <Tab $w={96} $on><TabConsole />控制台</Tab>
              <Tab $w={103} $pl={10}><TabAnim />动画编辑器</Tab>
              <MenuBtn />
            </TabBar>
            <ConsoleBar>
              <IconBtn $ml={3}><BanIcon /></IconBtn>
              <IconBtn $ml={21}><NoteIcon /></IconBtn>
              <FilterInput />
              <CheckBox />
              <MonoLabel>Regex</MonoLabel>
              <FailedSelect>
                Failed
                <CaretDown />
              </FailedSelect>
              <CheckBox $ml={742}><Check /></CheckBox>
              <MonoLabel>Collapse</MonoLabel>
            </ConsoleBar>
            <ConsoleBody />
          </Panel>
        </MiddleColumn>

        <Panel $w={396}>
          <TabBar>
            <Tab $w={103} $pl={12}><TabDoc />属性检查器</Tab>
            <MenuBtn />
          </TabBar>
          <InspectorBody>
            <NameRow>
              <CheckBox><Check /></CheckBox>
              <NameInput>password_text</NameInput>
              <Plus />
            </NameRow>
            <CompHeader $h={29} $mb={4}>
              <CaretDown $c="#a4a4a4" />
              <span>Node</span>
              <HeaderTools><Gear /></HeaderTools>
            </CompHeader>
            <PropRow><PropLabel>Position</PropLabel><Pair va="-80" vb="0" /></PropRow>
            <Prop label="Rotation"><Num value="0" /></Prop>
            <PropRow><PropLabel>Scale</PropLabel><Pair va="1" vb="1" /></PropRow>
            <PropRow><PropLabel>Anchor</PropLabel><Pair va="0.5" vb="0.5" /></PropRow>
            <PropRow><PropLabel>Size</PropLabel><Pair a="W" b="H" va="80" vb="40" wa={19} wb={18} /></PropRow>
            <Prop label="Color"><ColorBar /></Prop>
            <Prop label="Opacity"><Num value="255" /></Prop>
            <PropRow><PropLabel>Skew</PropLabel><Pair va="0" vb="0" /></PropRow>
            <Prop label="Group">
              <Select value="default" />
              <EditBtn>编辑</EditBtn>
            </Prop>

            <CompHeader $h={27} $mt={12} $mb={0}>
              <CaretDown $c="#a4a4a4" />
              <CheckBox><Check /></CheckBox>
              <span>Label</span>
              <HeaderTools><Book /><Gear /></HeaderTools>
            </CompHeader>
            <PropRow $h={59} $align="flex-start">
              <PropLabel $lh={36}>String</PropLabel>
              <StringArea>账户</StringArea>
            </PropRow>
            <Prop label="Horizontal Al..."><Select value="LEFT" /></Prop>
            <Prop label="Vertical Align"><Select value="TOP" /></Prop>
            <Prop label="Font Size"><Num value="40" /></Prop>
            <Prop label="Line Height"><Num value="40" /></Prop>
            <Prop label="Overflow"><Select value="NONE" /></Prop>
            <PropRow $h={40} $align="flex-end">
              <PropLabel $lh={30}>Font</PropLabel>
              <FontField>
                <FontChip>font<SmallLink /></FontChip>
                <FontBox>None</FontBox>
              </FontField>
            </PropRow>
            <Prop label="Font Family"><TextInput>Arial</TextInput></Prop>
            <Prop label="Use System ..."><CheckBox><Check /></CheckBox></Prop>
            <AddButton>添加组件</AddButton>
          </InspectorBody>
        </Panel>
      </Workspace>

      <Highlight $l={18} $t={187} $w={144} $h={16} />
      <Highlight $l={41} $t={203} $w={118} $h={22} />
      <Highlight $l={3} $t={306} $w={57} $h={25} />
      <Highlight $l={537} $t={330} $w={290} $h={43} />
      <Highlight $l={671} $t={373} $w={99} $h={60} />
      <Highlight $l={1518} $t={62} $w={146} $h={34} />
      <Highlight $l={1517} $t={413} $w={389} $h={94} />
    </Page>
  );
}
